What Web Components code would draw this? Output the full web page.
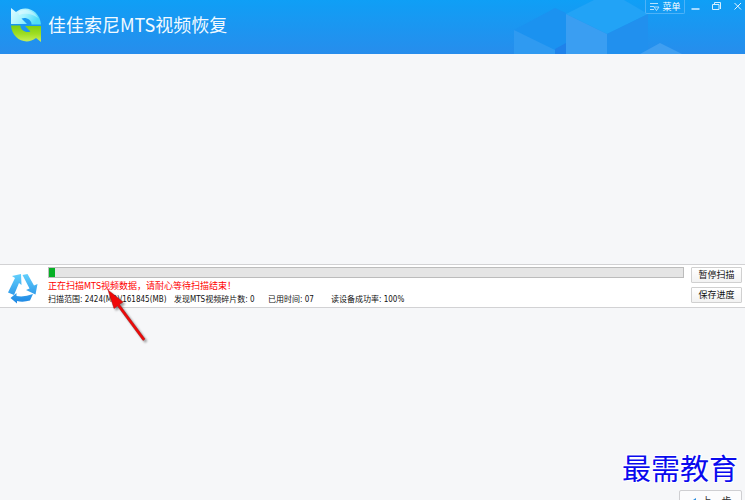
<!DOCTYPE html>
<html lang="zh-CN">
<head>
<meta charset="utf-8">
<title>佳佳索尼MTS视频恢复</title>
<style>
html, body { margin: 0; height: 100%; overflow: hidden; }
body { font: 9px/12px "DejaVu Sans Condensed", "Liberation Sans", "Noto Sans CJK SC", sans-serif; color: #111; }
</style>
</head>
<body>
<recovery-app></recovery-app>
<script>
const define = (name, html, setup) => customElements.define(name, class extends HTMLElement {
  constructor() {
    super();
    this.attachShadow({ mode: 'open' }).innerHTML = html;
    if (setup) setup(this);
  }
});

define('app-logo', `
<style>:host{display:block;width:32px;height:34px;flex:none}svg{display:block}</style>
<svg width="32" height="34" viewBox="0 0 32 34" aria-hidden="true">
  <defs>
    <linearGradient id="b" x1="0" y1="0" x2="1" y2=".4"><stop offset="0" stop-color="#e2fcff"/><stop offset=".55" stop-color="#a4f2ff"/><stop offset="1" stop-color="#4fdcf8"/></linearGradient>
    <linearGradient id="g" x1="0" y1="1" x2="0" y2="0"><stop offset="0" stop-color="#7ccf10"/><stop offset=".5" stop-color="#9fdd22"/><stop offset="1" stop-color="#c9f05a"/></linearGradient>
  </defs>
  <path fill="url(#b)" d="M1 0 6 4C16-4 30 3 31 16.500H21.500C22 12 16 8.500 11.500 10.500L17 16H1Z"/>
  <path fill="url(#g)" transform="rotate(180 16 17)" d="M1 0 6 4C16-4 30 3 31 16.500H21.500C22 12 16 8.500 11.500 10.500L17 16H1Z"/>
  <path fill="#fff" opacity=".35" d="M8 4C17-1 25 4 28 10 21 5 15 5 9 7Z"/>
</svg>`);

define('header-art', `
<style>:host{display:block;height:54px;width:245px}svg{display:block}</style>
<svg width="245" height="54" viewBox="0 0 245 54" aria-hidden="true">
  <path fill="#1b92f0" d="M14 30 55 8 66 13V54H14Z"/>
  <path fill="#2f9af1" d="M14 30 55 50V54H14Z"/>
  <path fill="#1f82ea" d="M55 49 66 43V54H55Z"/>
  <path fill="#22a3f6" d="M66 14 94 0H124L148 14 107 34Z"/>
  <path fill="#3a9ef2" d="M66 14 107 34V54H66Z"/>
  <path fill="#2190ee" d="M107 34 148 14V54H107Z"/>
  <path fill="#409ff1" d="M140 54 160 43 182 54Z"/>
</svg>`);

define('window-controls', `
<style>
:host{display:flex;align-items:flex-start;color:#fff}
button{display:block;border:0;padding:0;margin:0;background:none;color:inherit;font:inherit;height:14px;width:21px}
button:last-child{width:18px;padding-left:3px}
.menu{display:flex;align-items:center;justify-content:center;gap:2px;width:40px;border:1px solid #4db2f8;border-top:0;border-radius:0 0 2px 2px}
svg{display:block;margin:auto}
.menu svg{margin:0}
</style>
<button class="menu"><svg width="11" height="10" viewBox="0 0 11 10" fill="none" stroke="#b5e2ff"><path d="M1 1.500H9M1 4.500H5M1 7.500H5"/><path d="M5 5h5L7.500 8.500Z"/></svg>菜单</button>
<button aria-label="最小化"><svg width="9" height="12" viewBox="0 0 9 12"><path d="M.5 8H8.500" stroke="#a5daff" stroke-width="2"/></svg></button>
<button aria-label="还原"><svg width="10" height="12" viewBox="0 0 10 12" fill="none" stroke="#d5efff"><path d="M.5 3.500H7V8.500H.5ZM2.500 3V1.500H8.500V8"/></svg></button>
<button aria-label="关闭"><svg width="8" height="12" viewBox="0 0 8 12" fill="none" stroke="#e4f5ff"><path d="M.5 2 7 8.500M7 2 .5 8.500"/></svg></button>`);

define('title-bar', `
<style>
:host{display:flex;position:relative;box-sizing:border-box;height:54px;padding-left:10px;gap:6px;background:linear-gradient(#0f9ff6,#278dec);align-items:flex-start}
header-art{position:absolute;right:0;top:0}
app-logo{margin-top:8px}
h1{flex:1;margin:11px 0 0;color:#f2faff;font:400 18px/26px "Noto Sans CJK SC",sans-serif;white-space:nowrap}
window-controls{position:relative}
</style>
<header-art></header-art>
<app-logo></app-logo>
<h1><slot></slot></h1>
<window-controls></window-controls>`);

define('recycle-icon', `
<style>:host{display:block;width:30px;height:30px}svg{display:block}</style>
<svg width="30" height="30" viewBox="0 0 30 30" aria-hidden="true">
  <defs><linearGradient id="r" gradientUnits="userSpaceOnUse" x1="0" y1="0" x2="0" y2="29"><stop offset="0" stop-color="#62d0fc"/><stop offset="1" stop-color="#1d87e4"/></linearGradient></defs>
  <g fill="url(#r)">
  <path d="M4 2 13 0 13.500 11 11 9 6 21 0 18.500 7 4Z"/>
  <path d="M14.500 1 19.500 0 26 11.500 29.500 10 27.500 20.500 18 16 21.500 14.500Z"/>
  <path d="M2.500 24 8.500 19V22Q16 23.500 25 20L22 26.500Q15 28.500 9 27V29.500Z"/>
  </g>
</svg>`);

define('scan-progress', `
<style>
:host{display:block}
progress{-webkit-appearance:none;appearance:none;display:block;box-sizing:border-box;width:100%;height:11px;border:1px solid #bcbcbc;background:#e5e5e5}
progress::-webkit-progress-bar{background:#e5e5e5}
progress::-webkit-progress-value{background:#06b025}
</style>
<progress max="100" aria-label="扫描进度"></progress>`,
  el => { el.shadowRoot.querySelector('progress').value = Number(el.getAttribute('value')) || 1; });

define('push-button', `
<style>
:host{display:block}
button{display:block;box-sizing:border-box;width:100%;height:16px;padding:0;border:1px solid #d0d0d0;border-radius:1px;background:linear-gradient(#fff,#f2f2f2);font:inherit;line-height:12px;color:#111;white-space:nowrap}
</style>
<button><slot></slot></button>`);

define('scan-panel', `
<style>
:host{display:grid;grid-template-columns:32px 1fr 51px;column-gap:8px;box-sizing:border-box;padding:2px 3px 1px 8px;background:#fff;border:solid #d2d2d4;border-width:1px 0}
recycle-icon{margin-top:7px}
.info{margin-right:-1px}
p{margin:2px 0 1px;color:#f00;line-height:12px;white-space:nowrap}
.stats{display:grid;grid-template-columns:126px 94px 63px auto;font-size:8px;line-height:13px;white-space:nowrap}
.buttons{display:grid;gap:4px;align-content:start}
</style>
<recycle-icon></recycle-icon>
<div class="info">
  <scan-progress value="1"></scan-progress>
  <p>正在扫描MTS视频数据，请耐心等待扫描结束！</p>
  <div class="stats"><span>扫描范围: 2424(MB)/161845(MB)</span><span>发现MTS视频碎片数: 0</span><span>已用时间: 07</span><span>读设备成功率: 100%</span></div>
</div>
<div class="buttons"><push-button>暂停扫描</push-button><push-button>保存进度</push-button></div>`);

define('pointer-arrow', `
<style>:host{position:absolute;left:107px;top:25px;pointer-events:none}svg{display:block;filter:drop-shadow(2px 2px 1px #0006)}</style>
<svg width="44" height="56" viewBox="0 0 44 56" aria-hidden="true"><path fill="#f00808" stroke="#a01010" stroke-width=".5" d="M1 1 16 13 12.500 15.500 38 50 36 51.500 10.500 17 7 19.500Z"/></svg>`);

define('back-button', `
<style>
:host{display:block}
button{display:flex;align-items:center;justify-content:center;gap:6px;box-sizing:border-box;width:63px;height:24px;padding:0;border:1px solid #cfcfd2;border-radius:2px;background:#fcfcfd;color:#333;font:inherit;line-height:14px}
</style>
<button><svg width="6" height="8" viewBox="0 0 6 8" aria-hidden="true"><path fill="#2e8fe0" d="M6 0V8L0 4Z"/></svg><slot></slot></button>`);

define('recovery-app', `
<style>
:host{display:flex;flex-direction:column;position:relative;height:100vh;overflow:hidden;background:#f6f7f9}
title-bar{flex:none}
main{display:flex;flex-direction:column;flex:1;min-height:0}
.upper{flex:211}
.lower{flex:192;min-height:0;display:flex;flex-direction:column;justify-content:flex-end;align-items:flex-end;padding-right:3px}
.panel{position:relative}
back-button{margin-bottom:-14px;font-size:10px}
.mark{position:absolute;right:7px;bottom:15px;font:400 29px/36px "Noto Sans CJK SC",sans-serif;color:#0a0aee;text-shadow:0 0 2px #fff,1px 1px 1px #fff,-1px -1px 1px #fff,1px -1px 1px #fff,-1px 1px 1px #fff}
</style>
<title-bar>佳佳索尼MTS视频恢复</title-bar>
<main>
  <div class="upper"></div>
  <div class="panel"><scan-panel></scan-panel><pointer-arrow></pointer-arrow></div>
  <div class="lower"><back-button>上一步</back-button></div>
</main>
<div class="mark">最需教育</div>`);
</script>
</body>
</html>
